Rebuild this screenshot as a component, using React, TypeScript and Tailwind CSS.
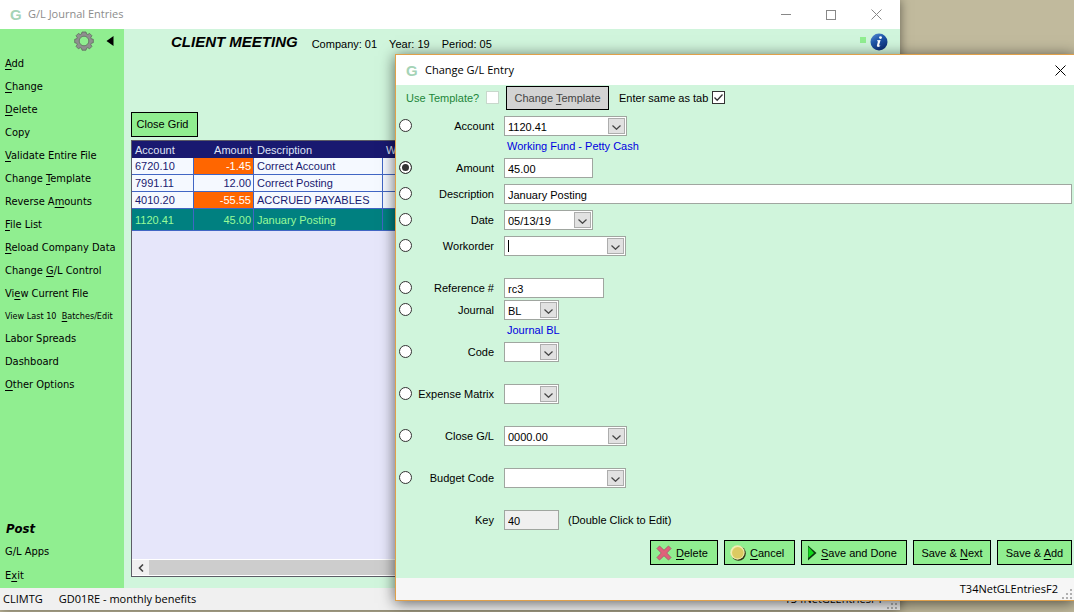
import { useState } from "react";
import type { ReactNode } from "react";

interface Entry {
  account: string;
  amount: string;
  description: string;
}

interface Field {
  id: string;
  label: string;
  kind: "text" | "combo";
  value: string;
  width: string;
  row: string;
  hint?: string;
  caret?: boolean;
}

// an underscore marks the access key that follows it
const menuItems = [
  "_Add",
  "_Change",
  "_Delete",
  "Copy",
  "_Validate Entire File",
  "Change _Template",
  "Reverse A_mounts",
  "_File List",
  "_Reload Company Data",
  "Change _G/L Control",
  "Vi_ew Current File",
  "View Last 10  _Batches/Edit",
  "Labor Spreads",
  "Dashboard",
  "_Other Options",
];

const entries: Entry[] = [
  { account: "6720.10", amount: "-1.45", description: "Correct Account" },
  { account: "7991.11", amount: "12.00", description: "Correct Posting" },
  { account: "4010.20", amount: "-55.55", description: "ACCRUED PAYABLES" },
  { account: "1120.41", amount: "45.00", description: "January Posting" },
];

const fields: Field[] = [
  { id: "account", label: "Account", kind: "combo", value: "1120.41", width: "w-[123px]", row: "h-[42px]", hint: "Working Fund - Petty Cash" },
  { id: "amount", label: "Amount", kind: "text", value: "45.00", width: "w-[89px]", row: "h-[26px]" },
  { id: "description", label: "Description", kind: "text", value: "January Posting", width: "w-full", row: "h-[26px]" },
  { id: "date", label: "Date", kind: "combo", value: "05/13/19", width: "w-[89px]", row: "h-[26px]" },
  { id: "workorder", label: "Workorder", kind: "combo", value: "", width: "w-[122px]", row: "h-[42px]", caret: true },
  { id: "reference", label: "Reference #", kind: "text", value: "rc3", width: "w-[100px]", row: "h-[22px]" },
  { id: "journal", label: "Journal", kind: "combo", value: "BL", width: "w-[55px]", row: "h-[42px]", hint: "Journal BL" },
  { id: "code", label: "Code", kind: "combo", value: "", width: "w-[55px]", row: "h-[42px]" },
  { id: "matrix", label: "Expense Matrix", kind: "combo", value: "", width: "w-[55px]", row: "h-[42px]" },
  { id: "close", label: "Close G/L", kind: "combo", value: "0000.00", width: "w-[123px]", row: "h-[42px]" },
  { id: "budget", label: "Budget Code", kind: "combo", value: "", width: "w-[122px]", row: "h-[42px]" },
];

const Keyed = ({ text }: { text: string }) => {
  const at = text.indexOf("_");
  if (at < 0) return <>{text}</>;
  return (
    <>
      {text.slice(0, at)}
      <span className="underline underline-offset-2">{text[at + 1]}</span>
      {text.slice(at + 2)}
    </>
  );
};

const CloseIcon = ({ className }: { className: string }) => (
  <svg viewBox="0 0 11 11" className={`size-[11px] ${className}`} fill="none" stroke="currentColor">
    <path d="M0.5 0.5L10.5 10.5M10.5 0.5L0.5 10.5" />
  </svg>
);

const AppLogo = () => (
  <span className="w-3 font-['Liberation_Sans',sans-serif] text-[15px] font-bold leading-none text-[#a5d3b6]">G</span>
);

const Grip = () => (
  <svg viewBox="0 0 11 11" className="size-[11px] self-end" fill="#b0b0b0">
    <path d="M8 0h2v2h-2zM4 4h2v2h-2zM8 4h2v2h-2zM0 8h2v2h-2zM4 8h2v2h-2zM8 8h2v2h-2z" />
  </svg>
);

const GearIcon = () => (
  <svg viewBox="0 0 20 20" className="size-5">
    <path
      fill="#8f8f8f"
      stroke="#5d6b5d"
      strokeWidth="0.8"
      fillRule="evenodd"
      d="M8 1h4l.5 2 1.3.5 1.8-1.1 2.3 2.3-1.1 1.9.5 1.2 2 .5v3.4l-2 .6-.5 1.3 1.1 1.8-2.3 2.4-1.8-1.1-1.3.5-.5 2H8l-.5-2-1.3-.5-1.8 1.1-2.3-2.4 1.1-1.8-.5-1.3-2-.6V8.3l2-.5.5-1.2-1.1-1.9 2.3-2.3 1.8 1.1 1.3-.5zM10 5.2a4.8 4.8 0 1 0 0 9.6a4.8 4.8 0 1 0 0-9.6z"
    />
  </svg>
);

const InfoIcon = () => (
  <svg viewBox="0 0 18 18" className="size-[18px]">
    <defs>
      <linearGradient id="info" x1="0" y1="0" x2="0.6" y2="1">
        <stop offset="0" stopColor="#5f93d6" />
        <stop offset="0.45" stopColor="#2159ab" />
        <stop offset="1" stopColor="#0d2f78" />
      </linearGradient>
    </defs>
    <circle cx="9" cy="9" r="8.5" fill="url(#info)" />
    <circle cx="10.5" cy="4.6" r="1.4" fill="#fff" />
    <path d="M7.2 7.3L10.6 6.9L9 12.6L10.3 12.3L10 13.3C8.8 14.3 6.6 14.4 6.9 12.6L8 8.2L7 8.2Z" fill="#fff" />
  </svg>
);

const DeleteIcon = () => (
  <svg viewBox="0 0 16 16" className="size-4">
    <path
      d="M3.5 1L8 5.3L12.5 1L15 3.5L10.7 8L15 12.5L12.5 15L8 10.7L3.5 15L1 12.5L5.3 8L1 3.5Z"
      fill="#e0607a"
      stroke="#a8646c"
    />
  </svg>
);

const CancelIcon = () => (
  <svg viewBox="0 0 16 16" className="size-4">
    <circle cx="8.5" cy="8.5" r="7.3" fill="#2f3313" />
    <circle cx="7.5" cy="7.5" r="7.2" fill="#f1eeb0" />
    <circle cx="7.8" cy="7.8" r="5.8" fill="#dcca62" />
  </svg>
);

const PlayIcon = () => (
  <svg viewBox="0 0 10 16" className="h-4 w-[10px]">
    <path d="M1 0.5L9.5 8L1 15.5Z" fill="#0b3a10" />
    <path d="M1.3 1.5L7 8L1.3 13Z" fill="#12d81c" />
  </svg>
);

const ActionButton = ({ children, className }: { children: ReactNode; className: string }) => (
  <button className={`flex h-[25px] items-center border border-black bg-[#90ee90] pt-px ${className}`}>
    {children}
  </button>
);

const Combo = ({ field }: { field: Field }) => (
  <div className={`relative h-5 shrink-0 ${field.width}`}>
    <select
      id={field.id}
      defaultValue={field.value}
      className="block h-full w-full appearance-none border border-[#a0a6a0] bg-white pl-[3px] pt-px leading-[18px] outline-none"
    >
      <option>{field.value}</option>
    </select>
    {field.caret && <span className="absolute left-1 top-1 h-3 w-px bg-black" />}
    <span className="pointer-events-none absolute right-0.5 top-0.5 flex h-4 w-[17px] items-center justify-center border border-[#adadad] bg-[#e1e1e1]">
      <svg viewBox="0 0 9 5" className="mt-0.5 h-[5px] w-[9px]" fill="none" stroke="#444" strokeWidth="1.2">
        <path d="M0.5 0.5L4.5 4.3L8.5 0.5" />
      </svg>
    </span>
  </div>
);

const MainWindow = () => (
  <section className="absolute bottom-0.5 left-0 right-[174px] top-0 flex flex-col bg-[#d0f5dc] shadow-[0_0_10px_rgba(0,0,0,0.5)]">
    <header className="flex h-[29px] shrink-0 items-center bg-white pl-2.5 pr-[18px] text-[#8c8c8c]">
      <AppLogo />
      <h1 className="ml-1.5 flex-1 font-['Open_Sans',sans-serif] text-[11px]">G/L Journal Entries</h1>
      <div className="flex items-center gap-[35px]">
        <button aria-label="Minimize" className="flex h-3 w-[10px] items-center">
          <span className="h-px w-full bg-[#888]" />
        </button>
        <button aria-label="Maximize" className="size-[10px] border border-[#888]" />
        <button aria-label="Close">
          <CloseIcon className="text-[#888]" />
        </button>
      </div>
    </header>

    <div className="flex min-h-0 flex-1">
      <nav className="flex w-[124px] shrink-0 flex-col bg-[#90ee90] font-['DejaVu_Sans_Condensed','DejaVu_Sans',sans-serif] text-[11px]">
        <div className="mb-px flex h-[23px] items-center justify-end gap-3 pr-2.5">
          <button aria-label="Settings">
            <GearIcon />
          </button>
          <button aria-label="Collapse menu">
            <svg viewBox="0 0 8 10" className="h-[10px] w-2">
              <path d="M7.5 0V10L0.5 5Z" />
            </svg>
          </button>
        </div>
        {menuItems.map((item) => (
          <a
            key={item}
            href="#"
            className={`flex items-center whitespace-pre pl-[5px] ${item.startsWith("View Last") ? "h-[22px] text-[9px]" : "h-[23px]"}`}
          >
            <span>
              <Keyed text={item} />
            </span>
          </a>
        ))}
        <div className="mt-auto">
          <a href="#" className="flex h-6 items-center pl-1.5 text-[13px] font-bold italic">
            Post
          </a>
          <a href="#" className="flex h-[23px] items-center pl-[5px]">
            G/L Apps
          </a>
          <a href="#" className="flex h-6 items-center pl-[5px]">
            <span>
              <Keyed text="E_xit" />
            </span>
          </a>
        </div>
      </nav>

      <main className="flex min-w-0 flex-1 flex-col pb-[11px] pl-[7px] pr-2">
        <div className="flex h-[83px] items-start pl-10 pr-1 pt-[3px]">
          <h2 className="text-[15px] font-bold italic leading-5">CLIENT MEETING</h2>
          <div className="flex flex-1 gap-3 pl-3.5 pt-0.5 leading-5">
            <span>Company: 01</span>
            <span>Year: 19</span>
            <span>Period: 05</span>
          </div>
          <div className="flex items-center gap-1 pt-px">
            <span className="mb-1 size-1.5 bg-[#90ee90]" />
            <button aria-label="Information">
              <InfoIcon />
            </button>
          </div>
        </div>
        <button className="h-[25px] w-[67px] border border-black bg-[#90ee90] pr-1">Close Grid</button>

        <div className="mt-[3px] flex min-h-0 flex-1 flex-col border border-[#5c5c66] bg-[#e6e6fa]">
          <table className="w-full table-fixed border-separate border-spacing-0 leading-4 text-[#191970]">
            <colgroup>
              <col className="w-[62px]" />
              <col className="w-[60px]" />
              <col className="w-[129px]" />
              <col />
            </colgroup>
            <thead>
              <tr className="h-[17px] bg-[#191970] text-left text-[#dfe3f5]">
                <th className="p-0 pl-[3px] font-normal">Account</th>
                <th className="p-0 pr-0.5 text-right font-normal">Amount</th>
                <th className="p-0 pl-[3px] font-normal">Description</th>
                <th className="p-0 pl-[3px] font-normal">Workorder</th>
              </tr>
            </thead>
            <tbody>
              {entries.map((entry, i) => {
                const selected = i === entries.length - 1;
                return (
                  <tr
                    key={entry.account}
                    className={selected ? "h-[22px] bg-[#008080] text-[#98fb98]" : "h-[17px] bg-[#f5f9ff]"}
                  >
                    <td className="border-b border-r border-[#4166c4] p-0 pl-[3px]">{entry.account}</td>
                    <td
                      className={`border-b border-r border-[#4166c4] p-0 pr-0.5 text-right ${
                        entry.amount.startsWith("-") ? "bg-[#ff6600] text-white" : ""
                      }`}
                    >
                      {entry.amount}
                    </td>
                    <td className="border-b border-r border-[#4166c4] p-0 pl-[3px]">{entry.description}</td>
                    <td className="border-b border-[#4166c4] p-0" />
                  </tr>
                );
              })}
            </tbody>
          </table>
          <div className="mt-auto flex h-[17px] items-stretch border-y border-white bg-[#cdcdcd]">
            <button aria-label="Scroll left" className="flex w-[17px] items-center justify-center bg-[#f0f0f0]">
              <svg viewBox="0 0 6 8" className="h-2 w-1.5" fill="none" stroke="#444" strokeWidth="1.6">
                <path d="M5 0.5L1.5 4L5 7.5" />
              </svg>
            </button>
          </div>
        </div>
      </main>
    </div>

    <footer className="flex h-[22px] shrink-0 items-center bg-[#f0f0f0] pl-[3px] pr-0.5 pt-px font-['Open_Sans',sans-serif] text-[11px]">
      <span>CLIMTG</span>
      <span className="flex-1 pl-4">GD01RE - monthly benefits</span>
      <span className="pr-1">T34NetGLEntriesF1</span>
      <Grip />
    </footer>
  </section>
);

const EntryDialog = () => {
  const [active, setActive] = useState("amount");

  return (
    <section
      role="dialog"
      aria-label="Change G/L Entry"
      className="absolute -right-px bottom-[11px] left-[395px] top-[54px] flex flex-col border border-[#e0a04a] bg-[#d0f5dc] shadow-[0_2px_14px_rgba(0,0,0,0.6)]"
    >
      <header className="flex h-[30px] shrink-0 items-center bg-white pl-2.5 pr-2">
        <AppLogo />
        <h2 className="ml-[7px] flex-1 font-['Open_Sans',sans-serif] text-[11px]">Change G/L Entry</h2>
        <button aria-label="Close dialog">
          <CloseIcon className="text-black" />
        </button>
      </header>

      <form className="flex flex-1 flex-col pl-[3px] pr-0.5 pt-px" onSubmit={(e) => e.preventDefault()}>
        <div className="flex h-[30px] items-start pl-[7px] leading-6">
          <label htmlFor="template" className="w-20 text-[#22863a]">
            Use Template?
          </label>
          <input
            id="template"
            type="checkbox"
            disabled
            className="mt-[5px] size-[13px] appearance-none border border-[#c8d8cc] bg-white"
          />
          <button className="ml-[7px] h-6 w-[103px] border border-black bg-[#d3d3d3] leading-5 text-[#444]">
            <Keyed text="Change _Template" />
          </button>
          <label htmlFor="sametab" className="ml-2.5 w-[93px]">
            Enter same as tab
          </label>
          <span className="relative mt-[5px] size-[13px]">
            <input
              id="sametab"
              type="checkbox"
              defaultChecked
              className="block size-full appearance-none border border-[#333] bg-white"
            />
            <svg viewBox="0 0 13 13" className="pointer-events-none absolute inset-0" fill="none" stroke="#333" strokeWidth="1.3">
              <path d="M2.5 6.5L5.2 9.3L10.5 3.5" />
            </svg>
          </span>
        </div>

        {fields.map((field) => (
          <div key={field.id} className={`flex shrink-0 items-start ${field.row}`}>
            <input
              type="radio"
              name="field"
              aria-label={`Select ${field.label}`}
              checked={active === field.id}
              onChange={() => setActive(field.id)}
              className="mt-[3px] size-[13px] shrink-0 appearance-none rounded-full border border-[#333] bg-white checked:bg-[#333] checked:shadow-[inset_0_0_0_2px_white]"
            />
            <label htmlFor={field.id} className="w-[82px] shrink-0 text-right leading-5">
              {field.label}
            </label>
            <div className="min-w-0 flex-1 pl-2.5">
              {field.kind === "combo" ? (
                <Combo field={field} />
              ) : (
                <input
                  id={field.id}
                  defaultValue={field.value}
                  className={`block h-5 border border-[#a0a6a0] bg-white pl-[3px] pt-px outline-none ${field.width}`}
                />
              )}
              {field.hint && <p className="pl-[3px] leading-5 text-[#0000e0]">{field.hint}</p>}
            </div>
          </div>
        ))}

        <div className="flex h-[30px] items-start leading-5">
          <label htmlFor="key" className="w-[95px] text-right">
            Key
          </label>
          <input
            id="key"
            readOnly
            defaultValue="40"
            className="ml-2.5 h-5 w-[55px] border border-[#a0a6a0] bg-[#f0f0f0] pl-[3px] pt-px outline-none"
          />
          <span className="ml-[9px]">(Double Click to Edit)</span>
        </div>

        <div className="flex justify-end gap-1.5">
          <ActionButton className="w-[68px] gap-1 pl-[5px]">
            <DeleteIcon />
            <span>
              <Keyed text="_Delete" />
            </span>
          </ActionButton>
          <ActionButton className="w-[71px] gap-1 pl-[5px]">
            <CancelIcon />
            <span>
              <Keyed text="_Cancel" />
            </span>
          </ActionButton>
          <ActionButton className="w-[106px] gap-1 pl-[5px]">
            <PlayIcon />
            <span>
              <Keyed text="_Save and Done" />
            </span>
          </ActionButton>
          <ActionButton className="w-[78px] justify-center">
            <span>
              <Keyed text="Save & _Next" />
            </span>
          </ActionButton>
          <ActionButton className="w-[75px] justify-center">
            <span>
              <Keyed text="Save & _Add" />
            </span>
          </ActionButton>
        </div>
      </form>

      <footer className="flex h-[22px] shrink-0 items-center justify-end bg-[#f6f6f6] pr-px pt-px font-['Open_Sans',sans-serif] text-[11px]">
        <span className="pr-1">T34NetGLEntriesF2</span>
        <Grip />
      </footer>
    </section>
  );
};

const App = () => {
  return (
    <div className="relative h-screen min-h-[612px] overflow-hidden bg-[#c1ba9d] font-['Liberation_Sans',Arial,sans-serif] text-[11px] text-black">
      <MainWindow />
      <EntryDialog />
    </div>
  );
};

export default App;
